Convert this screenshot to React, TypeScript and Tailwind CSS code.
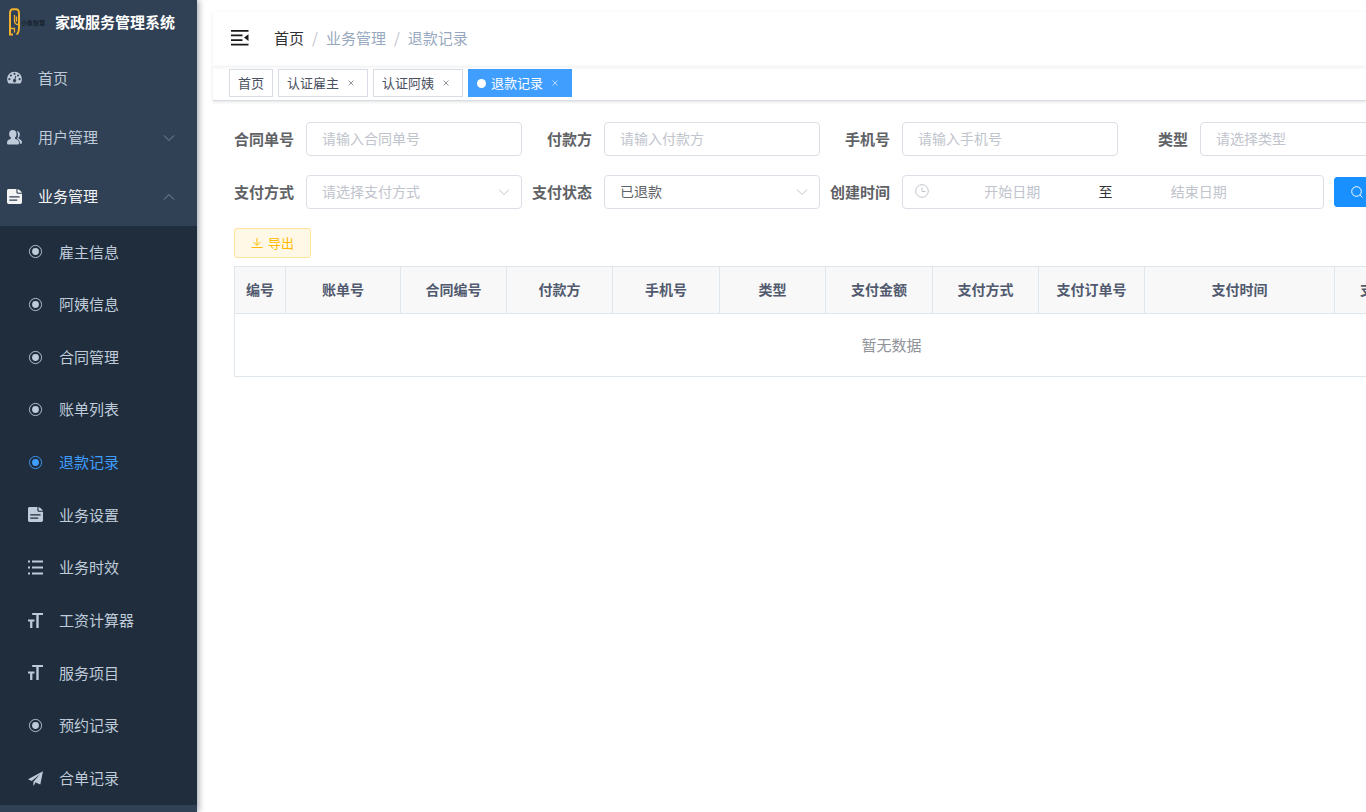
import React, { useState } from 'react'

type IconName = 'dashboard' | 'users' | 'doc' | 'radio' | 'list' | 'size' | 'plane'

interface MenuItem {
  label: string
  icon: IconName
}

const businessMenu: MenuItem[] = [
  { label: '雇主信息', icon: 'radio' },
  { label: '阿姨信息', icon: 'radio' },
  { label: '合同管理', icon: 'radio' },
  { label: '账单列表', icon: 'radio' },
  { label: '退款记录', icon: 'radio' },
  { label: '业务设置', icon: 'doc' },
  { label: '业务时效', icon: 'list' },
  { label: '工资计算器', icon: 'size' },
  { label: '服务项目', icon: 'size' },
  { label: '预约记录', icon: 'radio' },
  { label: '合单记录', icon: 'plane' },
]

const tabs = ['首页', '认证雇主', '认证阿姨', '退款记录']

const columns = [
  { title: '编号', width: 'w-[51px]' },
  { title: '账单号', width: 'w-[115px]' },
  { title: '合同编号', width: 'w-[106px]' },
  { title: '付款方', width: 'w-[106px]' },
  { title: '手机号', width: 'w-[107px]' },
  { title: '类型', width: 'w-[106px]' },
  { title: '支付金额', width: 'w-[107px]' },
  { title: '支付方式', width: 'w-[106px]' },
  { title: '支付订单号', width: 'w-[106px]' },
  { title: '支付时间', width: 'w-[190px]' },
  { title: '支付状态', width: 'w-[107px]' },
  { title: '创建时间', width: 'w-[107px]' },
]

function MenuIcon({ name }: { name: IconName }) {
  return (
    <svg viewBox="0 0 15 15" className="size-[15px] shrink-0" fill="currentColor" aria-hidden="true">
      {name === 'dashboard' && (
        <path
          fillRule="evenodd"
          d="M7.5.7A7.4 7.4 0 0 0 .1 8.100c0 1.500.4 2.800 1.100 3.900.2.300.4.400.8.400h11c.4 0 .6-.1.8-.4.7-1.100 1.100-2.400 1.100-3.900A7.400 7.400 0 0 0 7.500.7ZM2.400 7.100a1 1 0 1 1 0 2.100 1 1 0 0 1 0-2.100Zm1.500-3.700a1 1 0 1 1 0 2.100 1 1 0 0 1 0-2.100Zm3.600-1.600a1 1 0 1 1 0 2.100 1 1 0 0 1 0-2.100Zm3.600 1.600a1 1 0 1 1 0 2.100 1 1 0 0 1 0-2.100Zm1.500 3.700a1 1 0 1 1 0 2.100 1 1 0 0 1 0-2.100ZM8.400 4.800l.9.200-.8 3.300a1.600 1.600 0 1 1-1-.3l.9-3.200Z"
        />
      )}
      {name === 'users' && (
        <>
          <path d="M5.800 0c2.300 0 3.700 1.600 3.700 3.900 0 1.600-.6 2.900-1.500 3.700-.2.900.1 1.300 1 1.700 1.900.8 3 1.500 3 3.700 0 .9-.3 1.400-.9 1.400H.9c-.6 0-.9-.5-.9-1.400 0-2.200 1-2.900 2.900-3.700.9-.4 1.200-.8 1-1.700-1.100-.8-1.800-2.100-1.800-3.700C2.100 1.600 3.500 0 5.800 0Z" />
          <path d="M9.800.9c1.900.2 3 1.500 3 3.300 0 1.500-.5 2.700-1.300 3.400-.2.800.1 1.200.9 1.500 1.700.8 2.600 1.700 2.600 3.500 0 .7-.3 1.100-.8 1.100h-1.300c0-2.500-.8-3.700-3-4.700 1.300-1.600 1.700-5.700-.1-8.100Z" />
        </>
      )}
      {name === 'doc' && (
        <path
          fillRule="evenodd"
          d="M1.700 0h7.700v3.300c0 .9.600 1.500 1.500 1.500H15v8.500c0 1-.7 1.700-1.700 1.700H1.700C.7 15 0 14.300 0 13.300V1.700C0 .7.700 0 1.700 0Zm.6 7.300v1.200h10.300V7.300H2.300Zm0 3.200v1.200h7.900v-1.200H2.300ZM10.500 0c2 .8 3.500 2 4.400 3.800h-3.600c-.5 0-.8-.3-.8-.8V0Z"
        />
      )}
      {name === 'radio' && (
        <>
          <circle cx="7.500" cy="7.500" r="6.100" fill="none" stroke="currentColor" strokeWidth="0.900" />
          <circle cx="7.500" cy="7.500" r="3.400" />
        </>
      )}
      {name === 'list' && (
        <path d="M0 .5h2v2H0zM4 .5h11v2H4zM0 6.500h2v2H0zM4 6.500h11v2H4zM0 12.500h2v2H0zM4 12.500h11v2H4z" />
      )}
      {name === 'size' && <path d="M4.200 0H15v2h-4.300v13H8.300V2H4.200zM0 6.500h6.500v2H4.400V15H2.100V8.500H0z" />}
      {name === 'plane' && (
        <path d="M15 .2 0 8.200l3.700 1.700L12 3.200l-6.600 7.500V15l2-2.900-.9-1 5.800 2.500L15 .2Z" />
      )}
    </svg>
  )
}

function Chevron({ up = false, className = '' }: { up?: boolean; className?: string }) {
  return (
    <svg viewBox="0 0 12 12" className={`size-3 ${className}`} fill="none" stroke="currentColor" aria-hidden="true">
      <path d={up ? 'M1 8.500 6 3.500l5 5' : 'M1 3.500l5 5 5-5'} />
    </svg>
  )
}

function Field({ id, label, children }: { id: string; label: string; children: React.ReactNode }) {
  return (
    <div className="flex h-[34px] shrink-0 items-center">
      <label htmlFor={id} className="w-[72px] shrink-0 pr-3 text-right text-[15px] font-bold whitespace-nowrap text-[#606266]">
        {label}
      </label>
      {children}
    </div>
  )
}

function TextField({ id, label }: { id: string; label: string }) {
  return (
    <Field id={id} label={label}>
      <input
        id={id}
        type="text"
        placeholder={`请输入${label}`}
        className="h-[34px] w-[216px] rounded border border-[#dcdfe6] bg-white px-[15px] pb-[2px] text-sm text-[#606266] outline-none placeholder:text-[#c0c4cc] focus:border-[#409eff]"
      />
    </Field>
  )
}

function SelectField({ id, label, options, initial = '' }: { id: string; label: string; options: string[]; initial?: string }) {
  const [value, setValue] = useState(initial)

  return (
    <Field id={id} label={label}>
      <div className="relative w-[216px]">
        <select
          id={id}
          value={value}
          onChange={(e) => setValue(e.target.value)}
          className={`h-[34px] w-full appearance-none rounded border border-[#dcdfe6] bg-white px-[15px] pb-[2px] text-sm outline-none focus:border-[#409eff] ${value ? 'text-[#606266]' : 'text-[#c0c4cc]'}`}
        >
          <option value="">请选择{label}</option>
          {options.map((option) => (
            <option key={option} value={option}>
              {option}
            </option>
          ))}
        </select>
        <Chevron className="pointer-events-none absolute top-[11px] right-3 text-[#c0c4cc]" />
      </div>
    </Field>
  )
}

function Sidebar() {
  return (
    <aside className="relative z-10 w-[197px] shrink-0 bg-[#304156] text-[15px] text-[#bfcbd9] shadow-[2px_0_6px_rgba(0,21,41,0.350)]">
      <div className="mb-[5px] flex h-11 items-center pl-2">
        <svg viewBox="0 0 12 28" className="h-7 w-3 shrink-0" fill="none" stroke="#f2b02c" aria-hidden="true">
          <path d="M5 26.500H2V5.500C2 2.500 3 1.300 5 1.300h3c2 0 3 1.200 3 4.200v13.500c0 4-.8 6.500-2.500 7.500" strokeWidth="2" />
          <path d="M2 20.500h4.500v4M6.500 7v6c0 2.500 1.500 3.500 4 3.500M8.500 8.500v5" strokeWidth="1.300" />
        </svg>
        <span className="ml-px w-[34px] text-[6px] font-bold whitespace-nowrap text-[#17212d]">小象智慧</span>
        <h1 className="font-bold whitespace-nowrap text-white">家政服务管理系统</h1>
      </div>
      <nav>
        <a href="#home" className="flex h-[59px] items-center gap-4 pl-[7px]">
          <MenuIcon name="dashboard" />
          首页
        </a>
        <button type="button" className="flex h-[59px] w-full items-center gap-4 pr-[22px] pl-[7px]">
          <MenuIcon name="users" />
          用户管理
          <Chevron className="ml-auto text-[#7f8b9a]" />
        </button>
        <button type="button" className="flex h-[59px] w-full items-center gap-4 pr-[22px] pl-[7px] text-[#f4f4f5]">
          <MenuIcon name="doc" />
          业务管理
          <Chevron up className="ml-auto text-[#7f8b9a]" />
        </button>
        <ul className="grid h-[579px] auto-rows-fr bg-[#1f2d3d]">
          {businessMenu.map((item) => (
            <li key={item.label} className="flex">
              <a
                href="#menu"
                className={`flex w-full items-center gap-4 pb-px pl-7 ${item.label === '退款记录' ? 'text-[#409eff]' : ''}`}
              >
                <MenuIcon name={item.icon} />
                {item.label}
              </a>
            </li>
          ))}
        </ul>
      </nav>
    </aside>
  )
}

function Header() {
  return (
    <header className="mt-3 ml-4">
      <div className="flex h-[54px] items-center pb-[2px] pl-[18px] shadow-[0_1px_4px_rgba(0,21,41,0.080)]">
        <button type="button" aria-label="收起菜单" className="mr-[25px]">
          <svg viewBox="0 0 18 16" className="h-4 w-[18px]" fill="#1a1a1a" aria-hidden="true">
            <path d="M0 0h17.500v1.800H0zM0 4.500h11.500v1.800H0zM0 9.200h11.500V11H0zM0 13.700h17.500v1.800H0zM17.500 4.300v6.600L13 7.600z" />
          </svg>
        </button>
        <nav aria-label="面包屑" className="flex items-center text-[15px] text-[#97a8be]">
          <a href="#home" className="text-[#303133]">首页</a>
          <span className="mx-2 text-[#c0c4cc]">/</span>
          <span>业务管理</span>
          <span className="mx-2 text-[#c0c4cc]">/</span>
          <span>退款记录</span>
        </nav>
      </div>
      <div className="flex h-[35px] items-center gap-[5px] border-b border-[#d8dce5] pl-4 text-[13px] text-[#495060] shadow-[0_1px_3px_rgba(0,0,0,0.120)]">
        {tabs.map((tab) => {
          const active = tab === '退款记录'
          return (
            <div
              key={tab}
              className={`flex h-7 items-center border px-2 ${active ? 'border-[#409eff] bg-[#409eff] text-white' : 'border-[#d8dce5] bg-white'}`}
            >
              {active && <span className="mr-[5px] size-[9px] rounded-full bg-white" />}
              <a href="#tab">{tab}</a>
              {tab !== '首页' && (
                <button type="button" aria-label={`关闭${tab}`} className="ml-1 flex size-4 items-center justify-center">
                  <svg viewBox="0 0 6 6" className="size-[6px]" stroke="currentColor" strokeWidth="0.600" aria-hidden="true">
                    <path d="M.5.5l5 5M5.500.5l-5 5" />
                  </svg>
                </button>
              )}
            </div>
          )
        })}
      </div>
    </header>
  )
}

function SearchForm() {
  return (
    <form className="flex flex-col gap-[19px]" onSubmit={(e) => e.preventDefault()}>
      <div className="flex gap-[10px]">
        <TextField id="contractNo" label="合同单号" />
        <TextField id="payer" label="付款方" />
        <TextField id="phone" label="手机号" />
        <SelectField id="type" label="类型" options={['收款', '退款']} />
      </div>
      <div className="flex items-center gap-[10px]">
        <SelectField id="payWay" label="支付方式" options={['微信', '支付宝']} />
        <SelectField id="payStatus" label="支付状态" options={['已支付', '已退款']} initial="已退款" />
        <Field id="startDate" label="创建时间">
          <div className="flex h-[34px] w-[422px] items-center rounded border border-[#dcdfe6] bg-white pr-[41px] pb-[2px] pl-3 text-sm">
            <svg viewBox="0 0 14 14" className="size-[14px] shrink-0" fill="none" stroke="#c0c4cc" aria-hidden="true">
              <circle cx="7" cy="7" r="6.300" />
              <path d="M7 3.500V7.500h3.500" />
            </svg>
            <input
              id="startDate"
              type="text"
              placeholder="开始日期"
              className="min-w-0 flex-1 text-center outline-none placeholder:text-[#c0c4cc]"
            />
            <span className="w-5 text-center text-[#303133]">至</span>
            <input
              type="text"
              aria-label="结束日期"
              placeholder="结束日期"
              className="min-w-0 flex-1 text-center outline-none placeholder:text-[#c0c4cc]"
            />
          </div>
        </Field>
        <button
          type="submit"
          className="flex h-[30px] shrink-0 items-center gap-[5px] rounded-[3px] border border-[#1890ff] bg-[#1890ff] px-4 text-[13px] text-white"
        >
          <svg viewBox="0 0 12 12" className="size-3" fill="none" stroke="currentColor" aria-hidden="true">
            <circle cx="5.500" cy="5.500" r="4.800" />
            <path d="M9 9l2.500 2.500" />
          </svg>
          搜索
        </button>
      </div>
    </form>
  )
}

function RefundTable() {
  return (
    <table className="mt-2 w-[1314px] table-fixed border-collapse border border-[#dfe6ec]">
      <thead>
        <tr className="h-[47px] bg-[#f8f8f9] text-sm text-[#515a6e]">
          {columns.map((col) => (
            <th key={col.title} scope="col" className={`border border-[#dfe6ec] pb-[2px] font-bold whitespace-nowrap ${col.width}`}>
              {col.title}
            </th>
          ))}
        </tr>
      </thead>
      <tbody>
        <tr className="h-[63px]">
          <td colSpan={columns.length} className="text-center text-[15px] text-[#909399]">
            暂无数据
          </td>
        </tr>
      </tbody>
    </table>
  )
}

export default function App() {
  return (
    <div className="flex min-h-screen overflow-hidden bg-white font-['Noto_Sans_CJK_SC',sans-serif]">
      <Sidebar />
      <div className="min-w-0 flex-1 overflow-hidden">
        <Header />
        <main className="pt-[21px] pl-[37px]">
          <SearchForm />
          <button
            type="button"
            className="mt-[19px] flex h-[30px] items-center gap-[5px] rounded-[3px] border border-[#ffe399] bg-[#fff8e6] px-4 text-[13px] text-[#ffba00]"
          >
            <svg viewBox="0 0 12 12" className="size-3" fill="none" stroke="currentColor" aria-hidden="true">
              <path d="M6 1v7M2.500 5 6 8.500 9.500 5M.5 10.500h11" />
            </svg>
            导出
          </button>
          <RefundTable />
        </main>
      </div>
    </div>
  )
}
